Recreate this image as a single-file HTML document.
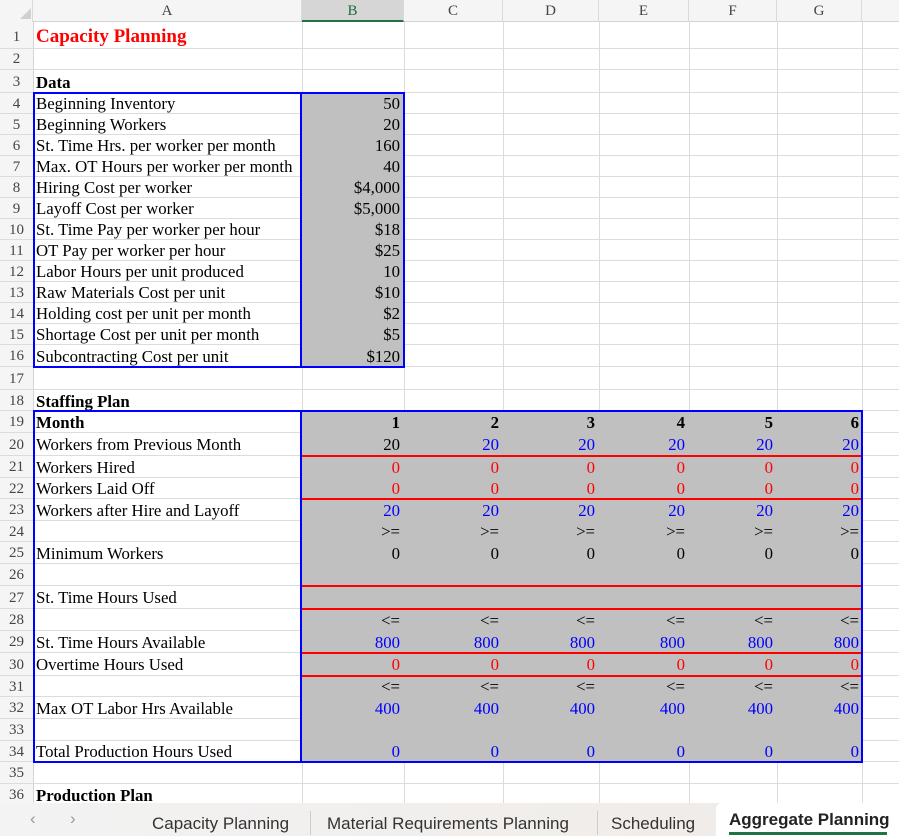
<!DOCTYPE html>
<html><head><meta charset="utf-8"><style>
*{margin:0;padding:0;box-sizing:border-box}
body{width:899px;height:836px;overflow:hidden;background:#fff;position:relative;font-family:"Liberation Serif",serif;font-size:16.8px;color:#000}
.abs{position:absolute}
.hdr{position:absolute;top:0;left:0;width:899px;height:22px;background:#f5f5f5;border-bottom:1px solid #d4d4d4}
.hc{position:absolute;top:0;height:22px;line-height:22px;text-align:center;font-size:15px;color:#444;border-right:1px solid #dadada}
.vl{position:absolute;top:22px;height:784px;width:1px;background:#dcdcdc}
.r{position:absolute;left:0;width:899px;border-bottom:1px solid #dcdcdc}
.r span{position:absolute;top:0;white-space:nowrap;z-index:2}
.n{left:0;width:33px;text-align:center;color:#444;font-size:15px;background:#f5f5f5;height:100%}
.a{left:36px}
.b{left:302px;width:98px;text-align:right}
.c{left:404px;width:95px;text-align:right}
.d{left:503px;width:92px;text-align:right}
.e{left:599px;width:86px;text-align:right}
.f{left:689px;width:84px;text-align:right}
.g{left:777px;width:82px;text-align:right}
.bl{color:#0000ff}.rd{color:#ff0000}.bo{font-weight:bold}
.gray{position:absolute;background:#c0c0c0;z-index:1}
.red{position:absolute;left:302px;width:560px;height:2px;background:#ff0000;z-index:3}
.bx{position:absolute;z-index:4}
</style></head><body>
<div class="hdr"></div>
<div class="abs" style="left:0;top:0;width:33px;height:22px;background:#f5f5f5;border-right:1px solid #dadada"></div>
<div class="abs" style="left:20px;top:8px;width:0;height:0;border-left:11px solid transparent;border-bottom:11px solid #d0d0d0"></div>
<div class="hc" style="left:33px;width:269px">A</div>
<div class="hc" style="left:302px;width:102px;background:#d6d6d6;color:#1e6b3c;border-bottom:2px solid #217346">B</div>
<div class="hc" style="left:404px;width:99px">C</div>
<div class="hc" style="left:503px;width:96px">D</div>
<div class="hc" style="left:599px;width:90px">E</div>
<div class="hc" style="left:689px;width:88px">F</div>
<div class="hc" style="left:777px;width:85px">G</div>

<div class="vl" style="left:33px;background:#d4d4d4"></div>
<div class="vl" style="left:302px"></div><div class="vl" style="left:404px"></div><div class="vl" style="left:503px"></div><div class="vl" style="left:599px"></div><div class="vl" style="left:689px"></div><div class="vl" style="left:777px"></div><div class="vl" style="left:862px"></div>

<div class="r" style="top:22px;height:27px;line-height:30px"><span class="n">1</span><span class="a bo rd" style="font-size:19px">Capacity Planning</span></div>
<div class="r" style="top:49px;height:21px;line-height:21px"><span class="n">2</span></div>
<div class="r" style="top:70px;height:23px;line-height:25px"><span class="n">3</span><span class="a bo">Data</span></div>
<div class="r" style="top:93px;height:21px;line-height:22px"><span class="n">4</span><span class="a">Beginning Inventory</span><span class="b">50</span></div>
<div class="r" style="top:114px;height:21px;line-height:22px"><span class="n">5</span><span class="a">Beginning Workers</span><span class="b">20</span></div>
<div class="r" style="top:135px;height:21px;line-height:22px"><span class="n">6</span><span class="a">St. Time Hrs. per worker per month</span><span class="b">160</span></div>
<div class="r" style="top:156px;height:21px;line-height:22px"><span class="n">7</span><span class="a">Max. OT Hours per worker per month</span><span class="b">40</span></div>
<div class="r" style="top:177px;height:21px;line-height:22px"><span class="n">8</span><span class="a">Hiring Cost per worker</span><span class="b">$4,000</span></div>
<div class="r" style="top:198px;height:21px;line-height:22px"><span class="n">9</span><span class="a">Layoff Cost per worker</span><span class="b">$5,000</span></div>
<div class="r" style="top:219px;height:21px;line-height:22px"><span class="n">10</span><span class="a">St. Time Pay per worker per hour</span><span class="b">$18</span></div>
<div class="r" style="top:240px;height:21px;line-height:22px"><span class="n">11</span><span class="a">OT Pay per worker per hour</span><span class="b">$25</span></div>
<div class="r" style="top:261px;height:21px;line-height:22px"><span class="n">12</span><span class="a">Labor Hours per unit produced</span><span class="b">10</span></div>
<div class="r" style="top:282px;height:21px;line-height:22px"><span class="n">13</span><span class="a">Raw Materials Cost per unit</span><span class="b">$10</span></div>
<div class="r" style="top:303px;height:21px;line-height:22px"><span class="n">14</span><span class="a">Holding cost per unit per month</span><span class="b">$2</span></div>
<div class="r" style="top:324px;height:21px;line-height:22px"><span class="n">15</span><span class="a">Shortage Cost per unit per month</span><span class="b">$5</span></div>
<div class="r" style="top:345px;height:22px;line-height:23px"><span class="n">16</span><span class="a">Subcontracting Cost per unit</span><span class="b">$120</span></div>
<div class="r" style="top:367px;height:23px;line-height:25px"><span class="n">17</span></div>
<div class="r" style="top:390px;height:21px;line-height:23px"><span class="n">18</span><span class="a bo">Staffing Plan</span></div>
<div class="r" style="top:411px;height:22px;line-height:23px"><span class="n">19</span><span class="a bo">Month</span><span class="b bo">1</span><span class="c bo">2</span><span class="d bo">3</span><span class="e bo">4</span><span class="f bo">5</span><span class="g bo">6</span></div>
<div class="r" style="top:433px;height:23px;line-height:24px"><span class="n">20</span><span class="a">Workers from Previous Month</span><span class="b">20</span><span class="c bl">20</span><span class="d bl">20</span><span class="e bl">20</span><span class="f bl">20</span><span class="g bl">20</span></div>
<div class="r rd" style="top:456px;height:22px;line-height:23px"><span class="n">21</span><span class="a" style="color:#000">Workers Hired</span><span class="b">0</span><span class="c">0</span><span class="d">0</span><span class="e">0</span><span class="f">0</span><span class="g">0</span></div>
<div class="r rd" style="top:478px;height:21px;line-height:22px"><span class="n">22</span><span class="a" style="color:#000">Workers Laid Off</span><span class="b">0</span><span class="c">0</span><span class="d">0</span><span class="e">0</span><span class="f">0</span><span class="g">0</span></div>
<div class="r bl" style="top:499px;height:22px;line-height:23px"><span class="n">23</span><span class="a" style="color:#000">Workers after Hire and Layoff</span><span class="b">20</span><span class="c">20</span><span class="d">20</span><span class="e">20</span><span class="f">20</span><span class="g">20</span></div>
<div class="r" style="top:521px;height:21px;line-height:22px"><span class="n">24</span><span class="b">&gt;=</span><span class="c">&gt;=</span><span class="d">&gt;=</span><span class="e">&gt;=</span><span class="f">&gt;=</span><span class="g">&gt;=</span></div>
<div class="r" style="top:542px;height:22px;line-height:23px"><span class="n">25</span><span class="a">Minimum Workers</span><span class="b">0</span><span class="c">0</span><span class="d">0</span><span class="e">0</span><span class="f">0</span><span class="g">0</span></div>
<div class="r" style="top:564px;height:22px;line-height:23px"><span class="n">26</span></div>
<div class="r" style="top:586px;height:23px;line-height:24px"><span class="n">27</span><span class="a">St. Time Hours Used</span></div>
<div class="r" style="top:609px;height:22px;line-height:23px"><span class="n">28</span><span class="b">&lt;=</span><span class="c">&lt;=</span><span class="d">&lt;=</span><span class="e">&lt;=</span><span class="f">&lt;=</span><span class="g">&lt;=</span></div>
<div class="r bl" style="top:631px;height:22px;line-height:23px"><span class="n">29</span><span class="a" style="color:#000">St. Time Hours Available</span><span class="b">800</span><span class="c">800</span><span class="d">800</span><span class="e">800</span><span class="f">800</span><span class="g">800</span></div>
<div class="r rd" style="top:653px;height:23px;line-height:24px"><span class="n">30</span><span class="a" style="color:#000">Overtime Hours Used</span><span class="b">0</span><span class="c">0</span><span class="d">0</span><span class="e">0</span><span class="f">0</span><span class="g">0</span></div>
<div class="r" style="top:676px;height:21px;line-height:22px"><span class="n">31</span><span class="b">&lt;=</span><span class="c">&lt;=</span><span class="d">&lt;=</span><span class="e">&lt;=</span><span class="f">&lt;=</span><span class="g">&lt;=</span></div>
<div class="r bl" style="top:697px;height:22px;line-height:23px"><span class="n">32</span><span class="a" style="color:#000">Max OT Labor Hrs Available</span><span class="b">400</span><span class="c">400</span><span class="d">400</span><span class="e">400</span><span class="f">400</span><span class="g">400</span></div>
<div class="r" style="top:719px;height:22px;line-height:23px"><span class="n">33</span></div>
<div class="r bl" style="top:741px;height:21px;line-height:22px"><span class="n">34</span><span class="a" style="color:#000">Total Production Hours Used</span><span class="b">0</span><span class="c">0</span><span class="d">0</span><span class="e">0</span><span class="f">0</span><span class="g">0</span></div>
<div class="r" style="top:762px;height:22px;line-height:23px"><span class="n">35</span></div>
<div class="r" style="top:784px;height:22px;line-height:23px"><span class="n">36</span><span class="a bo">Production Plan</span></div>

<!-- gray fills (cover gridlines) -->
<div class="gray" style="left:302px;top:93px;width:102px;height:274px"></div>
<div class="gray" style="left:302px;top:411px;width:560px;height:351px"></div>

<!-- red lines -->
<div class="red" style="top:455px"></div><div class="red" style="top:498px"></div><div class="red" style="top:585px"></div><div class="red" style="top:608px"></div><div class="red" style="top:652px"></div><div class="red" style="top:675px"></div>

<!-- blue boxes -->
<div class="bx" style="left:33px;top:92px;width:372px;height:276px;border:2px solid #0000ff"></div>
<div class="bx" style="left:300px;top:92px;width:2px;height:276px;background:#0000ff"></div>
<div class="bx" style="left:33px;top:410px;width:830px;height:353px;border:2px solid #0000ff"></div>
<div class="bx" style="left:300px;top:410px;width:2px;height:353px;background:#0000ff"></div>

<!-- tab bar -->
<div class="abs" style="z-index:5;left:0;top:803px;width:899px;height:33px;background:linear-gradient(90deg,#f3f3f3,#efeae6);font-family:'Liberation Sans',sans-serif;font-size:17px;color:#333">
<span class="abs" style="left:30px;top:6px;color:#999">&#x2039;</span>
<span class="abs" style="left:70px;top:6px;color:#999">&#x203A;</span>
<span class="abs" style="left:152px;top:11px">Capacity Planning</span>
<div class="abs" style="left:310px;top:8px;width:1px;height:24px;background:#ccc"></div>
<span class="abs" style="left:327px;top:11px">Material Requirements Planning</span>
<div class="abs" style="left:597px;top:8px;width:1px;height:24px;background:#ccc"></div>
<span class="abs" style="left:611px;top:11px">Scheduling</span>
<div class="abs" style="left:716px;top:0;width:183px;height:33px;background:#fff;border-radius:6px 0 0 0"></div>
<span class="abs" style="left:729px;top:7px;font-weight:bold;color:#222">Aggregate Planning</span>
<div class="abs" style="left:729px;top:29px;width:158px;height:3px;background:#217346"></div>
</div>
</body></html>
